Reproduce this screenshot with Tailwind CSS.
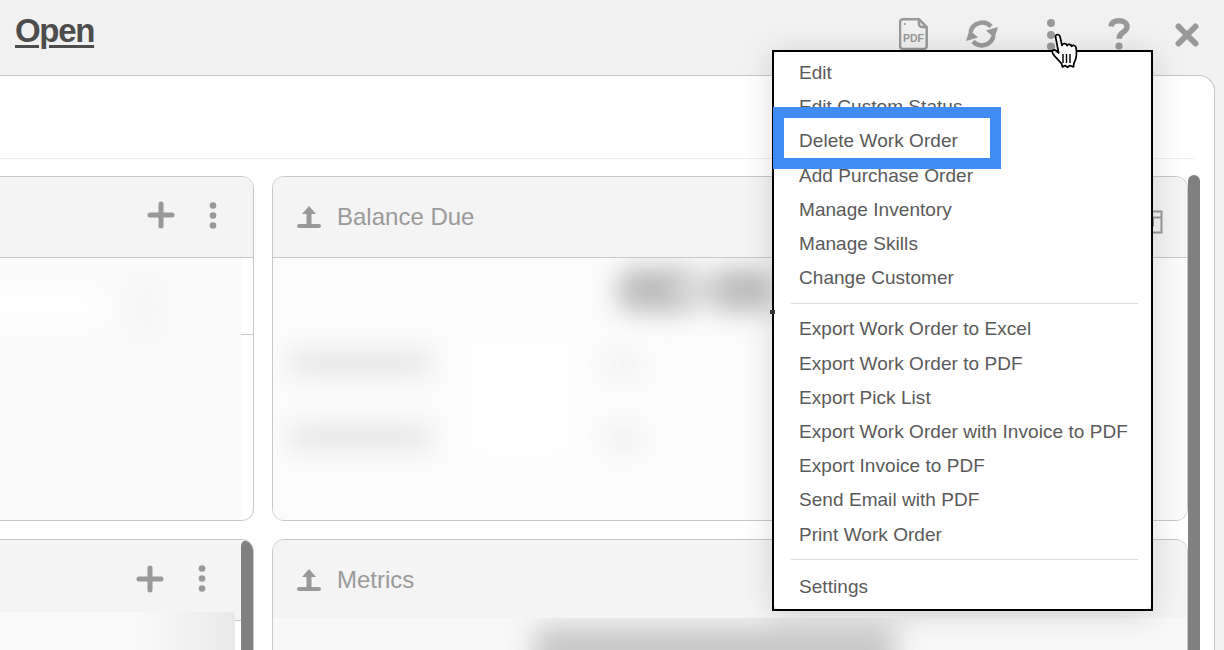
<!DOCTYPE html>
<html lang="en">
<head>
  <meta charset="UTF-8">
  <title>Work Order - Open</title>
  <script src="https://cdn.jsdelivr.net/npm/@tailwindcss/browser@4"></script>
</head>
<body class="bg-[#f1f1f1]">
  <div class="relative w-[1224px] h-[650px] overflow-hidden bg-[#f1f1f1] font-['Liberation_Sans',Arial,sans-serif]">

    <!-- top bar -->
    <header class="h-[75px] flex items-start">
      <h1 class="ml-[15px] mt-[12px] text-[33px] leading-[38px] tracking-[-1.300px] font-bold underline decoration-[3px] underline-offset-[3px] text-[#4d4d4d]">Open</h1>
      <div class="ml-auto flex items-start text-[#999]">
        <!-- pdf -->
        <div class="relative w-[29px] h-[32px] mt-[18px]">
          <svg width="29" height="32" viewBox="0 0 29 32" fill="none" stroke="#999" stroke-width="2.500">
            <path d="M4 1.300h16l7.700 7.700v19a3 3 0 0 1-3 3H4a3 3 0 0 1-3-3V4.300a3 3 0 0 1 3-3z"/>
            <path d="M20 1.500v4.500a3 3 0 0 0 3 3h4.500"/>
            <circle cx="6" cy="6" r="1.100" fill="#999" stroke="none"/>
          </svg>
          <span class="absolute left-[4px] top-[14px] text-[10.500px] leading-[12px] font-bold text-[#999]">PDF</span>
        </div>
        <!-- sync -->
        <svg class="ml-[38px] mt-[18px]" width="32" height="32" viewBox="0 0 32 32" fill="none" stroke="#999" stroke-width="4.500">
          <path d="M4.500 14A12 12 0 0 1 25 8.500"/>
          <path d="M27.500 18A12 12 0 0 1 7 23.500"/>
          <path d="M32 9 L28.500 20 L20 12.500 Z" fill="#999" stroke="none"/>
          <path d="M0 23 L3.500 12 L12 19.500 Z" fill="#999" stroke="none"/>
        </svg>
        <!-- kebab -->
        <svg class="ml-[48px] mt-[18px]" width="10" height="34" viewBox="0 0 10 34" fill="#999">
          <circle cx="5" cy="5" r="4"/><circle cx="5" cy="17" r="4"/><circle cx="5" cy="28.500" r="4"/>
        </svg>
        <!-- help -->
        <svg class="ml-[52px] mt-[18px]" width="22" height="32" viewBox="0 0 22 32" fill="none" stroke="#999" stroke-width="5.500">
          <path d="M3 8.500C3.500 4.800 6.500 2.800 11 2.800c4.800 0 8 2.500 8 6 0 5.500-7.800 5.500-7.800 11.200v.8"/>
          <circle cx="11" cy="28" r="3.600" fill="#999" stroke="none"/>
        </svg>
        <!-- close -->
        <svg class="ml-[45px] mr-[25px] mt-[23px]" width="24" height="24" viewBox="0 0 24 24" fill="none" stroke="#999" stroke-width="6" stroke-linecap="round">
          <path d="M3.500 3.500l17 17M20.500 3.500l-17 17"/>
        </svg>
      </div>
    </header>

    <!-- main panel -->
    <main class="relative -ml-[20px] w-[1235px] h-[600px] bg-white border-t border-r border-[#c8c8c8] rounded-tr-[16px]">
      <div class="h-[83px] w-[1215px] border-b border-[#eeeeee]"></div>
      <div class="flex pt-[17px]">
        <div class="grid grid-cols-[274px_916px] grid-rows-[345px_345px] gap-x-[18px] gap-y-[18px] shrink-0">

          <!-- card: top left -->
          <section class="relative border border-[#c8c8c8] rounded-[12px] overflow-hidden flex flex-col">
            <div class="h-[81px] shrink-0 bg-[#f4f4f4] border-b border-[#c8c8c8] flex items-start justify-end">
              <svg class="mt-[24px]" width="28" height="28" viewBox="0 0 28 28" stroke="#999" stroke-width="5" stroke-linecap="round">
                <path d="M14 3v22M3 14h22"/>
              </svg>
              <svg class="ml-[34px] mr-[36px] mt-[25px]" width="8" height="28" viewBox="0 0 8 28" fill="#999">
                <circle cx="4" cy="3.500" r="3.300"/><circle cx="4" cy="13.500" r="3.300"/><circle cx="4" cy="23.500" r="3.300"/>
              </svg>
            </div>
            <div class="flex-1">
              <div class="h-[77px] border-b border-[#c8c8c8]"></div>
            </div>
            <div class="absolute left-0 top-[81px] w-[260px] h-[264px] bg-[#fafafa] overflow-hidden">
              <div class="absolute -left-[20px] top-[32px] w-[140px] h-[34px] bg-white blur-[12px]"></div>
              <div class="absolute left-[150px] top-[25px] w-[30px] h-[50px] bg-[#f6f6f6] blur-[10px]"></div>
            </div>
          </section>

          <!-- card: balance due -->
          <section class="relative border border-[#c8c8c8] rounded-[12px] overflow-hidden flex flex-col">
            <div class="h-[81px] shrink-0 bg-[#f4f4f4] border-b border-[#c8c8c8] flex items-start pl-[24px]">
              <svg class="mt-[28px]" width="24" height="24" viewBox="0 0 24 24" fill="#999">
                <path d="M12 1l7 8h-4.500v10h-5V9H5z"/><rect x="0" y="19" width="24" height="4" rx="2"/>
              </svg>
              <h2 class="ml-[16px] mt-[26px] text-[24px] leading-[28px] text-[#9a9a9a]">Balance Due</h2>
              <svg class="ml-auto mr-[24px] mt-[33px]" width="18" height="24" viewBox="0 0 18 24" fill="none" stroke="#999" stroke-width="2">
                <path d="M1.500 1.500h15v21h-15zM1.500 7.500h15M8 7.500v9"/>
              </svg>
            </div>
            <div class="relative flex-1 bg-[#fbfbfb] overflow-hidden">
              <div class="absolute left-[345px] top-[10px] w-[75px] h-[44px] rounded-[16px] bg-[#bdbdbd] blur-[12px]"></div>
              <div class="absolute left-[400px] top-[16px] w-[50px] h-[32px] rounded-[16px] bg-[#d8d8d8] blur-[12px]"></div>
              <div class="absolute left-[440px] top-[10px] w-[60px] h-[44px] rounded-[16px] bg-[#bdbdbd] blur-[12px]"></div>
              <div class="absolute left-[18px] top-[93px] w-[138px] h-[24px] bg-[#e6e6e6] blur-[11px]"></div>
              <div class="absolute left-[18px] top-[167px] w-[138px] h-[24px] bg-[#e6e6e6] blur-[11px]"></div>
              <div class="absolute left-[190px] top-[76px] w-[115px] h-[125px] bg-white blur-[12px]"></div>
              <div class="absolute left-[335px] top-[95px] w-[30px] h-[24px] bg-[#f3f3f3] blur-[10px]"></div>
              <div class="absolute left-[335px] top-[168px] w-[30px] h-[24px] bg-[#f1f1f1] blur-[10px]"></div>
            </div>
          </section>

          <!-- card: bottom left -->
          <section class="relative border border-[#c8c8c8] rounded-[12px] overflow-hidden flex flex-col">
            <div class="h-[81px] shrink-0 bg-[#f4f4f4] border-b border-[#c8c8c8] flex items-start justify-end">
              <svg class="mt-[25px]" width="28" height="28" viewBox="0 0 28 28" stroke="#999" stroke-width="5" stroke-linecap="round">
                <path d="M14 3v22M3 14h22"/>
              </svg>
              <svg class="ml-[34px] mr-[47px] mt-[25px]" width="8" height="28" viewBox="0 0 8 28" fill="#999">
                <circle cx="4" cy="3.500" r="3.300"/><circle cx="4" cy="13.500" r="3.300"/><circle cx="4" cy="23.500" r="3.300"/>
              </svg>
            </div>
            <div class="absolute left-0 top-[72px] w-[254px] h-[60px] bg-linear-to-r from-[#fafafa] from-[60%] to-[#e9e9e9]"></div>
            <div class="absolute right-0 top-0 w-[12px] h-full bg-[#808080] rounded-t-[8px]"></div>
          </section>

          <!-- card: metrics -->
          <section class="relative border border-[#c8c8c8] rounded-[12px] overflow-hidden flex flex-col">
            <div class="h-[81px] shrink-0 bg-[#f4f4f4] border-b border-[#c8c8c8] flex items-start pl-[24px]">
              <svg class="mt-[28px]" width="24" height="24" viewBox="0 0 24 24" fill="#999">
                <path d="M12 1l7 8h-4.500v10h-5V9H5z"/><rect x="0" y="19" width="24" height="4" rx="2"/>
              </svg>
              <h2 class="ml-[16px] mt-[26px] text-[24px] leading-[28px] text-[#9a9a9a]">Metrics</h2>
            </div>
            <div class="absolute left-0 top-[78px] w-full h-[60px] bg-[#f8f8f8] overflow-hidden">
              <div class="absolute left-[262px] top-[8px] w-[360px] h-[60px] bg-[#c6c6c6] blur-[14px]"></div>
            </div>
          </section>
        </div>

        <!-- page scrollbar -->
        <div class="w-[12px] h-[480px] -mt-[1px] bg-[#808080] rounded-t-[8px] shrink-0"></div>
      </div>
    </main>

    <!-- actions menu -->
    <nav class="absolute left-[772px] top-[50px] w-[381px] h-[561px] border-2 border-black bg-[#e8e8e8] shadow-[0_4px_30px_rgba(0,0,0,0.14)]">
      <div class="h-full bg-white rounded-[5px] pt-[4px] text-[19px] leading-[34.200px] tracking-[0.050px] text-[#5a5a5a]">
        <ul class="pl-[25px]">
          <li>Edit</li>
          <li>Edit Custom Status</li>
          <li>Delete Work Order</li>
          <li>Add Purchase Order</li>
          <li>Manage Inventory</li>
          <li>Manage Skills</li>
          <li>Change Customer</li>
        </ul>
        <div class="ml-[17px] mr-[13px] my-[8px] h-px bg-[#dddddd]"></div>
        <ul class="pl-[25px]">
          <li>Export Work Order to Excel</li>
          <li>Export Work Order to PDF</li>
          <li>Export Pick List</li>
          <li>Export Work Order with Invoice to PDF</li>
          <li>Export Invoice to PDF</li>
          <li>Send Email with PDF</li>
          <li>Print Work Order</li>
        </ul>
        <div class="ml-[17px] mr-[13px] mt-[7px] mb-[10px] h-px bg-[#dddddd]"></div>
        <ul class="pl-[25px]">
          <li>Settings</li>
        </ul>
      </div>
    </nav>

    <!-- stray tick on the menu edge -->
    <div class="absolute left-[770px] top-[310px] w-[5px] h-[4px] bg-[#333]"></div>

    <!-- highlight around delete -->
    <div class="absolute left-[773px] top-[107px] w-[228px] h-[62px] border-[11px] border-[#3f8cf4]"></div>

    <!-- hand cursor -->
    <svg class="absolute left-[1047px] top-[33px]" width="34" height="36" viewBox="0 0 32 36" fill="#fff" stroke="#000" stroke-width="1.700" stroke-linejoin="round">
      <path d="M7.500 3.500c0-2.500 4-2.500 4.500 0l2 9c.5-2.500 4.500-2.500 5 .2.600-2 4.200-1.800 4.700.6.800-1.500 4-1 4.300 1.200.5 3.500 1 7-.2 11-.6 2.200-1.500 3.500-2 5.500l-.3 3-3.500-1.500-2.500 1.800-2.500-1.800-2.500 1.500-.8-3c-2-3-6.500-6.500-9-10.500-1.500-2.500 1-4.500 3-3l3 2.500z"/>
      <path d="M15 21v9M18.500 21v9M22 21v9" fill="none" stroke-width="1.400"/>
    </svg>
  </div>
</body>
</html>
